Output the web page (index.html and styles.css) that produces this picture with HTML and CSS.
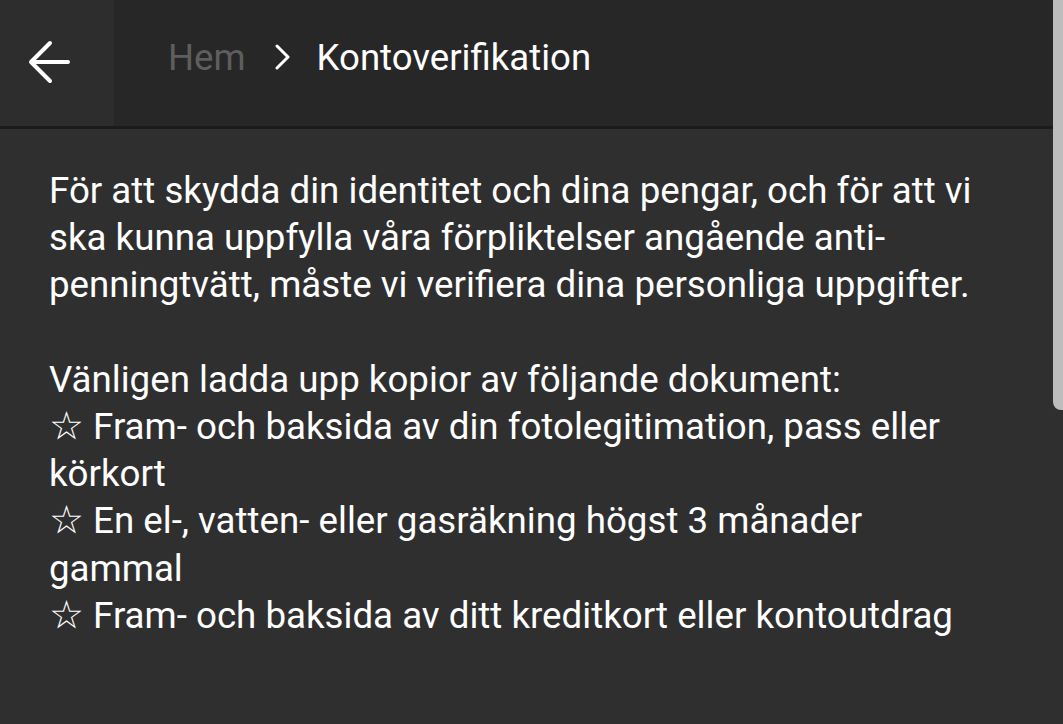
FILE: index.html
```html
<!DOCTYPE html>
<html lang="sv">
<head>
<meta charset="utf-8">
<link rel="stylesheet" href="styles.css">
</head>
<body>
<div class="app">
  <header class="topbar">
    <button class="back" aria-label="Tillbaka">
      <svg width="44" height="46" viewBox="0 0 44 46"><path d="M40 23H4M22 4L3 23l19 19" fill="none" stroke="#fff" stroke-width="4" stroke-linecap="round" stroke-linejoin="round"/></svg>
    </button>
    <nav class="crumbs">
      <span class="crumb-home">Hem</span>
      <svg class="chev" width="16" height="26" viewBox="0 0 16 26"><path d="M3 2l11 11L3 24" fill="none" stroke="#fff" stroke-width="3" stroke-linecap="round" stroke-linejoin="round"/></svg>
      <span class="crumb-current">Kontoverifikation</span>
    </nav>
  </header>
  <main class="content">
    <p>För att skydda din identitet och dina pengar, och för att vi ska kunna uppfylla våra förpliktelser angående anti-penningtvätt, måste vi verifiera dina personliga uppgifter.<br><br>Vänligen ladda upp kopior av följande dokument:<br><span class="star">☆</span> Fram- och baksida av din fotolegitimation, pass eller körkort<br><span class="star">☆</span> En el-, vatten- eller gasräkning högst 3 månader gammal<br><span class="star">☆</span> Fram- och baksida av ditt kreditkort eller kontoutdrag</p>
  </main>
  <div class="scrollbar"></div>
</div>
</body>
</html>
```
FILE: styles.css
```css
html, body { margin: 0; padding: 0; }
body {
  background: #2f2f2f;
  font-family: Roboto, "Noto Sans", sans-serif;
  color: #fff;
  width: 1063px;
  height: 724px;
  overflow: hidden;
}
.app { position: relative; height: 724px; }
.topbar {
  display: flex;
  height: 126px;
  background: #272727;
  border-bottom: 3px solid #1b1b1b;
}
.back {
  width: 114px;
  height: 126px;
  background: #2d2d2d;
  border: 0;
  margin: 0;
  padding: 0 15px 2px 0;
  display: flex;
  align-items: center;
  justify-content: center;
}
.crumbs {
  display: flex;
  align-items: center;
  padding-left: 54px;
  font-size: 36.6px;
  padding-bottom: 12px;
}
.crumb-home { color: #5e5e5e; }
.chev { margin: 0 27px 0 28px; }
.crumb-current { color: #fff; }
.content {
  padding: 38px 0 0 49px;
}
.content p {
  margin: 0;
  font-size: 36.7px;
  line-height: 47.2px;
  width: 932px;
  color: #fff;
}
.star {
  font-family: "DejaVu Sans", sans-serif;
  font-size: 39px;
  line-height: 1;
}
.scrollbar {
  position: absolute;
  top: 0;
  right: 0;
  width: 10px;
  height: 410px;
  background: #bdbdbd;
  border-bottom-left-radius: 8px;
}
```
